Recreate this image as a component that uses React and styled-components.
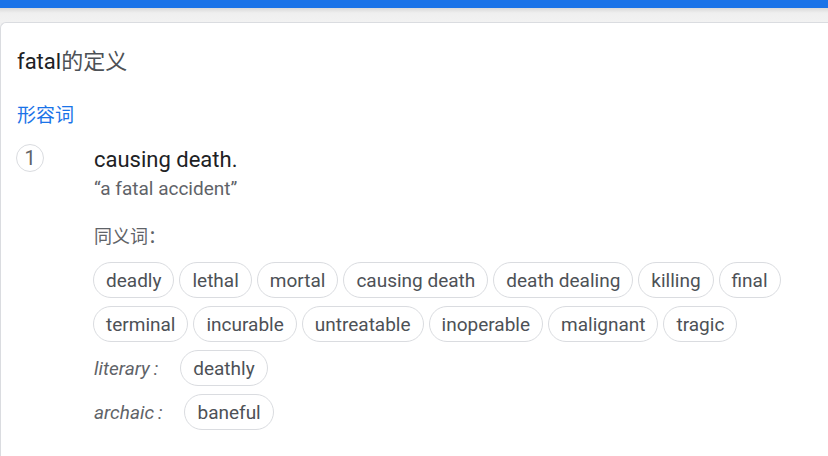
import styled, { createGlobalStyle } from 'styled-components';

const GlobalStyle = createGlobalStyle`
	html, body {
		margin: 0;
		padding: 0;
		background: #ffffff;
		font-family: Roboto, Arial, 'Noto Sans CJK SC', sans-serif;
	}
`;

const synonyms = [
	'deadly',
	'lethal',
	'mortal',
	'causing death',
	'death dealing',
	'killing',
	'final',
	'terminal',
	'incurable',
	'untreatable',
	'inoperable',
	'malignant',
	'tragic',
];

const extras = [
	{ label: 'literary', word: 'deathly' },
	{ label: 'archaic', word: 'baneful' },
];

function App() {
	return (
		<Page>
			<GlobalStyle />
			<TopBar />
			<Shade />
			<Card>
				<Title>
					fatal<Cjk>的定义</Cjk>
				</Title>
				<PartOfSpeech>形容词</PartOfSpeech>
				<Sense>
					<Num>1</Num>
					<SenseBody>
						<Gloss>causing death.</Gloss>
						<Example>“a fatal accident”</Example>
						<SynLabel>同义词：</SynLabel>
						<Chips>
							{synonyms.map((s) => (
								<Chip key={s}>{s}</Chip>
							))}
						</Chips>
						{extras.map((e) => (
							<ExtraRow key={e.label}>
								<Register>{e.label}&thinsp;:</Register>
								<Chip>{e.word}</Chip>
							</ExtraRow>
						))}
					</SenseBody>
				</Sense>
			</Card>
		</Page>
	);
}

export default App;

const Page = styled.div`
	width: 828px;
	height: 456px;
	overflow: hidden;
	background: #f1f1f1;
	display: flex;
	flex-direction: column;
`;

const TopBar = styled.div`
	height: 8px;
	background: #1a73e8;
	flex-shrink: 0;
`;

const Shade = styled.div`
	height: 14px;
	flex-shrink: 0;
	background: linear-gradient(#d9d9d9, #efefef 5px, #f2f2f2);
`;

const Card = styled.div`
	flex: 1;
	background: #ffffff;
	border-top: 1px solid #dadce0;
	border-left: 1px solid #dadce0;
	border-top-left-radius: 6px;
	padding: 25px 16px 0 15px;
`;

const Title = styled.div`
	font-size: 22px;
	line-height: 28px;
	color: #202124;
	padding-left: 1px;
`;

const Cjk = styled.span`
	color: #4d5156;
`;

const PartOfSpeech = styled.div`
	margin-top: 28px;
	font-size: 19px;
	line-height: 24px;
	color: #1a73e8;
	padding-left: 1px;
`;

const Sense = styled.div`
	display: flex;
	margin-top: 16px;
`;

const Num = styled.div`
	width: 28px;
	height: 28px;
	box-sizing: border-box;
	border: 1px solid #dadce0;
	border-radius: 50%;
	display: flex;
	align-items: center;
	justify-content: center;
	font-size: 20px;
	color: #5f6368;
	flex-shrink: 0;
`;

const SenseBody = styled.div`
	margin-left: 49px;
	display: flex;
	flex-direction: column;
`;

const Gloss = styled.div`
	font-size: 22px;
	line-height: 28px;
	color: #202124;
	margin-top: 2px;
	padding-left: 1px;
`;

const Example = styled.div`
	font-size: 19px;
	line-height: 24px;
	color: #5f6368;
	margin-top: 3px;
	padding-left: 1px;
`;

const SynLabel = styled.div`
	font-size: 18px;
	line-height: 24px;
	color: #5f6368;
	margin-top: 24px;
	padding-left: 1px;
`;

const Chips = styled.div`
	display: flex;
	flex-wrap: wrap;
	gap: 8px 5px;
	margin-top: 13px;
	width: 720px;
`;

const Chip = styled.div`
	height: 34px;
	padding: 0 12px;
	border: 1px solid #dadce0;
	border-radius: 18px;
	display: flex;
	align-items: center;
	font-size: 19px;
	color: #4d5156;
	white-space: nowrap;
`;

const ExtraRow = styled.div`
	display: flex;
	align-items: center;
	gap: 22px;
	margin-top: 8px;
	padding-left: 1px;
`;

const Register = styled.span`
	font-size: 19px;
	font-style: italic;
	color: #5f6368;
`;
